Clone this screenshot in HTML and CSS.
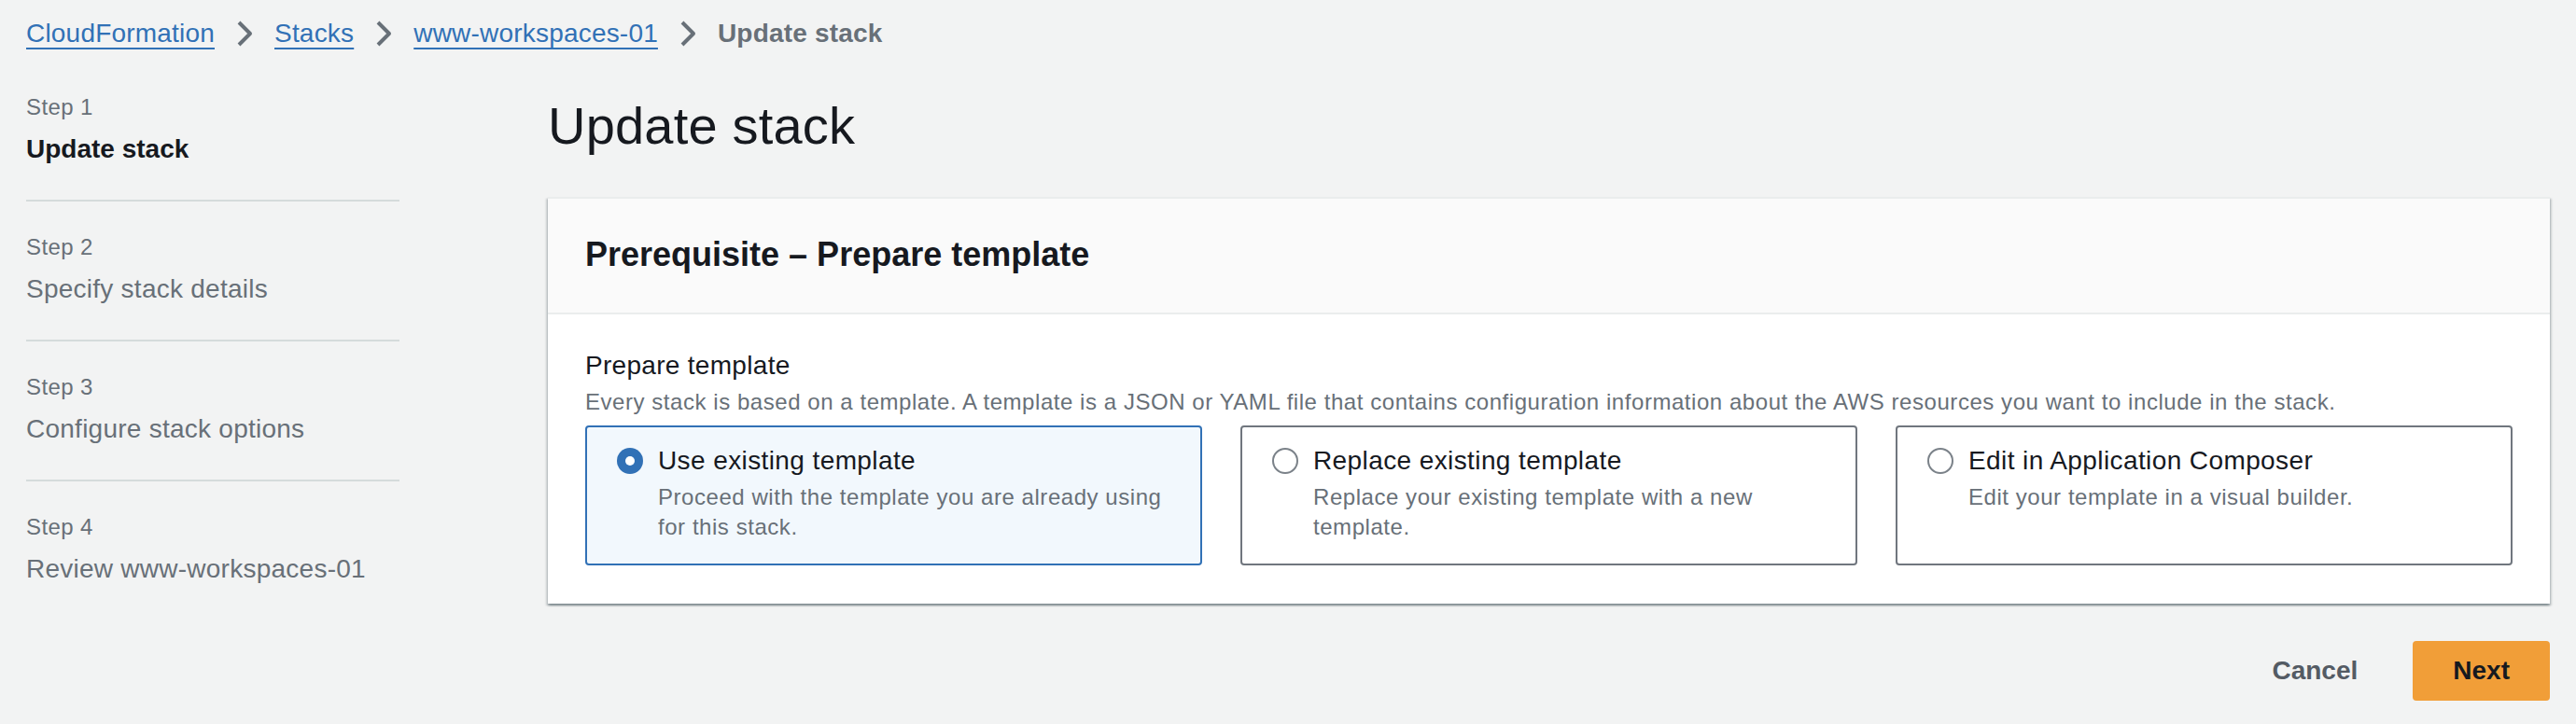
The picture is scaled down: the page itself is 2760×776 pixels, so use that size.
FILE: index.html
```html
<!DOCTYPE html>
<html lang="en">
<head>
<meta charset="utf-8">
<title>Update stack</title>
<link rel="stylesheet" href="styles.css">
</head>
<body>
<div class="page">
  <nav class="breadcrumbs">
    <a class="crumb-link" href="#">CloudFormation</a>
    <span class="chev"><svg viewBox="0 0 32 32" width="32" height="32"><path d="M10 4 L22 16 L10 28" fill="none" stroke="#687078" stroke-width="4" stroke-linejoin="round"/></svg></span>
    <a class="crumb-link" href="#">Stacks</a>
    <span class="chev"><svg viewBox="0 0 32 32" width="32" height="32"><path d="M10 4 L22 16 L10 28" fill="none" stroke="#687078" stroke-width="4" stroke-linejoin="round"/></svg></span>
    <a class="crumb-link" href="#">www-workspaces-01</a>
    <span class="chev"><svg viewBox="0 0 32 32" width="32" height="32"><path d="M10 4 L22 16 L10 28" fill="none" stroke="#687078" stroke-width="4" stroke-linejoin="round"/></svg></span>
    <span class="crumb-current">Update stack</span>
  </nav>

  <div class="layout">
    <ol class="steps">
      <li class="step">
        <div class="step-label">Step 1</div>
        <div class="step-title active">Update stack</div>
      </li>
      <li class="step">
        <div class="step-label">Step 2</div>
        <div class="step-title">Specify stack details</div>
      </li>
      <li class="step">
        <div class="step-label">Step 3</div>
        <div class="step-title">Configure stack options</div>
      </li>
      <li class="step">
        <div class="step-label">Step 4</div>
        <div class="step-title">Review www-workspaces-01</div>
      </li>
    </ol>

    <main class="main">
      <h1 class="page-title">Update stack</h1>

      <section class="card">
        <header class="card-header">
          <h2 class="card-title">Prerequisite – Prepare template</h2>
        </header>
        <div class="card-body">
          <div class="field-label">Prepare template</div>
          <div class="field-desc">Every stack is based on a template. A template is a JSON or YAML file that contains configuration information about the AWS resources you want to include in the stack.</div>
          <div class="tiles">
            <div class="tile selected">
              <svg class="radio" viewBox="0 0 28 28" width="28" height="28"><circle cx="14" cy="14" r="14" fill="#3171b6"/><circle cx="14" cy="14" r="5" fill="#ffffff"/></svg>
              <div class="tile-text">
                <div class="tile-title">Use existing template</div>
                <div class="tile-desc">Proceed with the template you are already using for this stack.</div>
              </div>
            </div>
            <div class="tile">
              <svg class="radio" viewBox="0 0 28 28" width="28" height="28"><circle cx="14" cy="14" r="13" fill="#ffffff" stroke="#7b8289" stroke-width="2"/></svg>
              <div class="tile-text">
                <div class="tile-title">Replace existing template</div>
                <div class="tile-desc">Replace your existing template with a new template.</div>
              </div>
            </div>
            <div class="tile">
              <svg class="radio" viewBox="0 0 28 28" width="28" height="28"><circle cx="14" cy="14" r="13" fill="#ffffff" stroke="#7b8289" stroke-width="2"/></svg>
              <div class="tile-text">
                <div class="tile-title">Edit in Application Composer</div>
                <div class="tile-desc">Edit your template in a visual builder.</div>
              </div>
            </div>
          </div>
        </div>
      </section>

      <div class="actions">
        <button class="btn btn-link" type="button">Cancel</button>
        <button class="btn btn-primary" type="button">Next</button>
      </div>
    </main>
  </div>
</div>
</body>
</html>
```

FILE: styles.css
```css
* { box-sizing: border-box; }

html, body {
  margin: 0;
  padding: 0;
  background: #f2f3f3;
}

body {
  font-family: "Liberation Sans", Arial, sans-serif;
  color: #16191f;
}

.page {
  padding: 0 28px;
}

/* Breadcrumbs */
.breadcrumbs {
  display: flex;
  align-items: center;
  padding-top: 16px;
  height: 56px;
  font-size: 28px;
  line-height: 40px;
  letter-spacing: 0.2px;
}

.crumb-link {
  color: #3171b6;
  text-decoration: underline;
  text-decoration-thickness: 2px;
  text-underline-offset: 6px;
}

.crumb-current {
  color: #687078;
  font-weight: 700;
}

.chev {
  display: flex;
  width: 32px;
  height: 32px;
  margin: 0 16px;
}

/* Layout */
.layout {
  display: flex;
  margin-top: 43px;
}

.steps {
  list-style: none;
  margin: 0;
  padding: 0;
  width: 400px;
  flex: 0 0 400px;
}

.step {
  padding: 33px 0 34px;
  border-bottom: 2px solid #d5dbdb;
}

.step:first-child { padding-top: 0; }
.step:last-child { border-bottom: none; }

.step-label {
  font-size: 24px;
  line-height: 32px;
  letter-spacing: 0.4px;
  color: #687078;
}

.step-title {
  margin-top: 9px;
  font-size: 28px;
  line-height: 40px;
  letter-spacing: 0.25px;
  color: #687078;
}

.step-title.active {
  color: #16191f;
  font-weight: 700;
  letter-spacing: 0;
}

.main {
  flex: 1;
  margin-left: 159px;
  min-width: 0;
}

.page-title {
  margin: 0;
  font-size: 56px;
  line-height: 72px;
  font-weight: 400;
  letter-spacing: 0.2px;
  color: #16191f;
}

/* Card */
.card {
  margin-top: 40px;
  background: #ffffff;
  border-top: 2px solid #eaeded;
  box-shadow: 0 2px 2px 0 rgba(0, 28, 36, 0.3), 2px 2px 2px 0 rgba(0, 28, 36, 0.15), -2px 2px 2px 0 rgba(0, 28, 36, 0.15);
}

.card-header {
  background: #fafafa;
  padding: 36px 40px 38px;
  border-bottom: 2px solid #eaeded;
}

.card-title {
  margin: 0;
  font-size: 36px;
  line-height: 48px;
  font-weight: 700;
  color: #16191f;
}

.card-body {
  padding: 35px 40px 41px;
}

.field-label {
  font-size: 28px;
  line-height: 40px;
  letter-spacing: 0.3px;
  color: #16191f;
}

.field-desc {
  margin-top: 3px;
  font-size: 24px;
  line-height: 32px;
  letter-spacing: 0.55px;
  color: #687078;
}

.tiles {
  margin-top: 9px;
  display: grid;
  grid-template-columns: repeat(3, 1fr);
  gap: 41px;
}

.tile {
  display: flex;
  align-items: flex-start;
  gap: 16px;
  min-height: 150px;
  padding: 16px 32px 23px 32px;
  border: 2px solid #70767e;
  border-radius: 4px;
  background: #ffffff;
}

.tile.selected {
  border-color: #3171b6;
  background: #f2f8fd;
}

.radio {
  flex: 0 0 28px;
  margin-top: 6px;
}

.tile-text {
  flex: 1;
  min-width: 0;
}

.tile-title {
  font-size: 28px;
  line-height: 40px;
  letter-spacing: 0.4px;
  color: #16191f;
}

.tile-desc {
  margin-top: 3px;
  font-size: 24px;
  line-height: 32px;
  letter-spacing: 0.55px;
  color: #687078;
}

/* Actions */
.actions {
  display: flex;
  justify-content: flex-end;
  gap: 16px;
  margin-top: 40px;
}

.btn {
  height: 64px;
  padding: 0 43px;
  border: none;
  border-radius: 4px;
  font-family: "Liberation Sans", Arial, sans-serif;
  font-size: 28px;
  font-weight: 700;
  line-height: 64px;
  cursor: pointer;
}

.btn-link {
  background: transparent;
  color: #545b64;
}

.btn-primary {
  background: #f19e38;
  color: #16191f;
}
```
